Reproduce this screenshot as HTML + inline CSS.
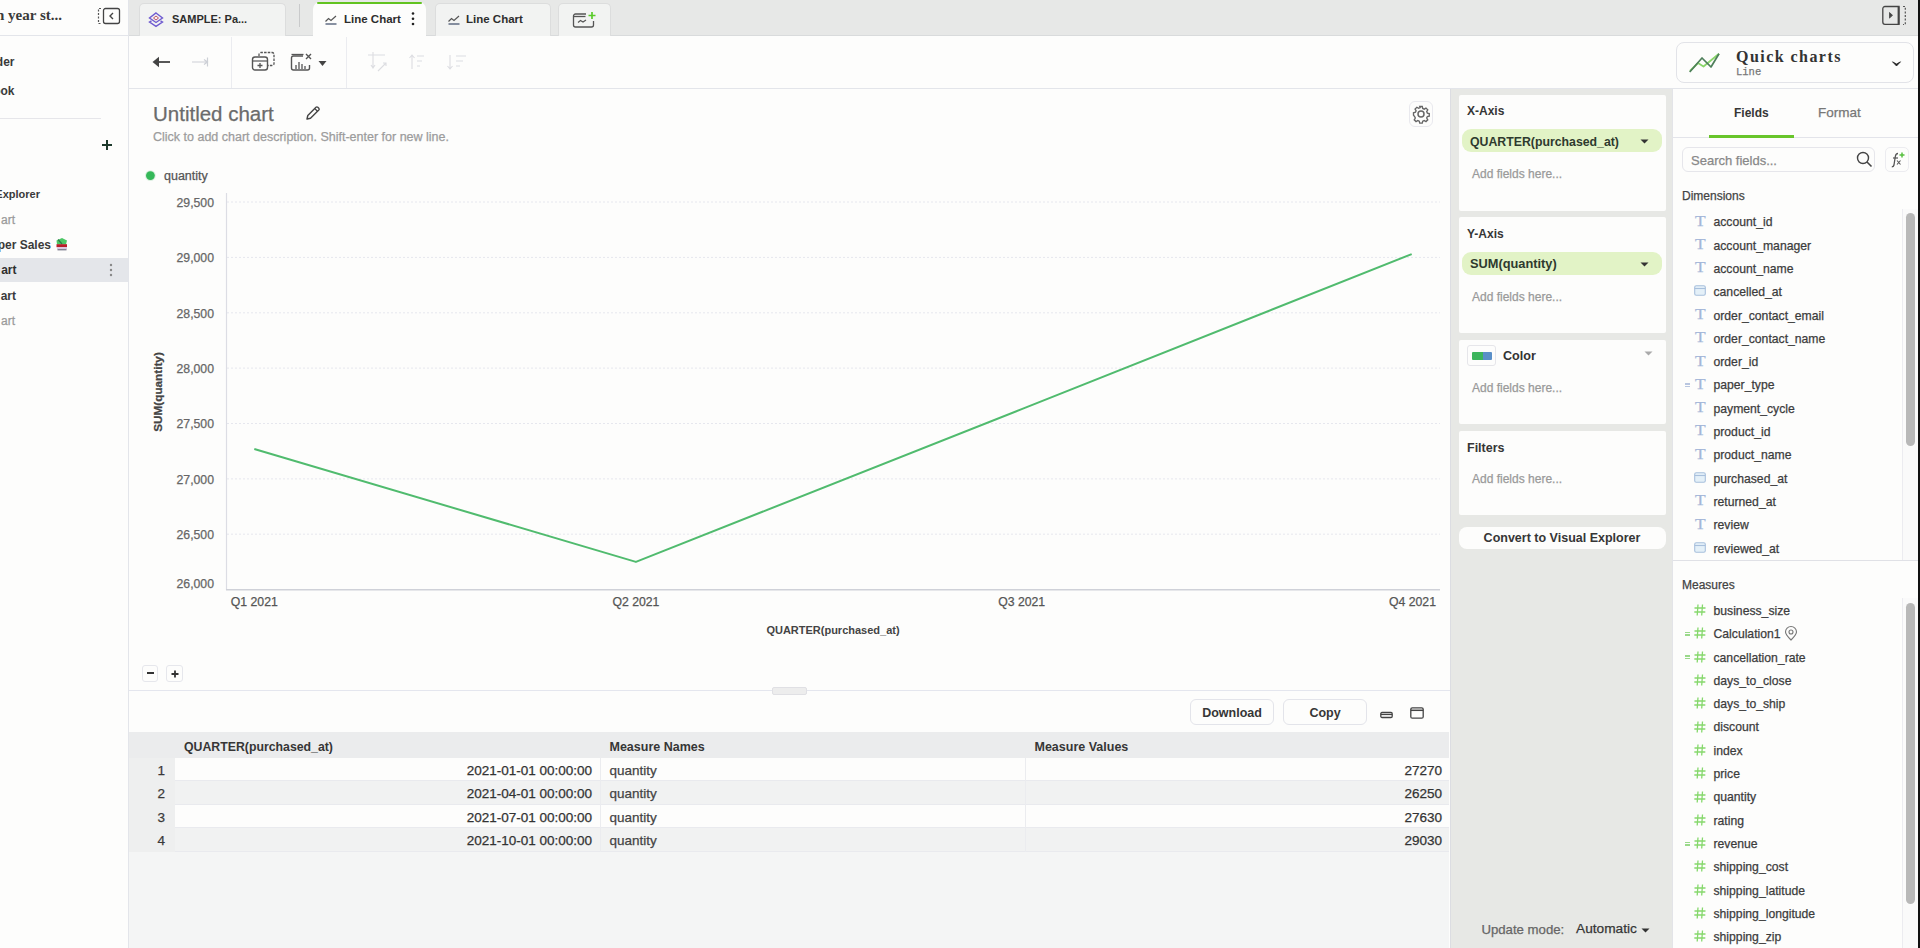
<!DOCTYPE html>
<html><head><meta charset="utf-8">
<style>
*{box-sizing:border-box;margin:0;padding:0}
html,body{width:1920px;height:948px;overflow:hidden;background:#fdfdfc;font-family:"Liberation Sans",sans-serif;color:#333;position:relative}
.a{position:absolute}
.t{position:absolute;white-space:nowrap;line-height:1;-webkit-text-stroke:0.25px currentColor}
svg{overflow:visible}
</style></head><body>
<div class="a" style="left:0px;top:0px;width:129px;height:948px;background:#fdfdfc;border-right:1px solid #e3e5ea"></div>
<div class="a" style="left:129px;top:0px;width:1789px;height:36px;background:#e7e8e7;border-bottom:1px solid #d9dbdc"></div>
<div class="a" style="left:129px;top:88px;width:1789px;height:1px;background:#e3e5ea"></div>
<div class="a" style="left:1918px;top:0px;width:2px;height:948px;background:#111"></div>
<div class="t" style="top:7.50px;font-size:15px;color:#3a3a3a;font-weight:700;-webkit-text-stroke:0;font-family:'Liberation Serif',serif;left:-4px;">n year st...</div>
<svg class="a" style="left:94px;top:6px" width="28" height="20" viewBox="0 0 28 20"><path d="M7 2.5h-2.5v15H7" fill="none" stroke="#555" stroke-width="1.2" stroke-dasharray="2 1.5"/><rect x="9.5" y="2.5" width="16" height="15" rx="2" fill="none" stroke="#444" stroke-width="1.3"/><path d="M19 7l-3 3 3 3" fill="none" stroke="#444" stroke-width="1.4"/></svg>
<div class="a" style="left:0px;top:35px;width:129px;height:1px;background:#e3e5ea"></div>
<div class="t" style="top:55.54px;font-size:12px;color:#3a3a3a;font-weight:700;-webkit-text-stroke:0;right:1905.5px;">der</div>
<div class="t" style="top:84.54px;font-size:12px;color:#3a3a3a;font-weight:700;-webkit-text-stroke:0;right:1905.5px;">ook</div>
<div class="a" style="left:0px;top:118px;width:101px;height:1px;background:#e6e6ea"></div>
<svg class="a" style="left:101px;top:139px" width="12" height="12" viewBox="0 0 12 12"><path d="M6 1v10M1 6h10" stroke="#1e3a2c" stroke-width="2"/></svg>
<div class="t" style="top:189.09px;font-size:11px;color:#3a3a3a;font-weight:700;-webkit-text-stroke:0;right:1880px;">Explorer</div>
<div class="t" style="top:213.54px;font-size:12px;color:#9a9a9a;right:1905px;">art</div>
<div class="t" style="top:238.94px;font-size:12px;color:#3a3a3a;font-weight:700;-webkit-text-stroke:0;right:1869px;">per Sales</div>
<svg class="a" style="left:55px;top:237px" width="13" height="14" viewBox="0 0 13 14"><path d="M1.5 3.5L7 1l5 2.5-1 4H2z" fill="#4cc765"/><path d="M3 2.5l4 4.5" stroke="#2d7a4a" stroke-width="1.2"/><rect x="1.5" y="7.2" width="10.5" height="3" fill="#b81d2a"/><rect x="2" y="10.2" width="10" height="2" fill="#d9c6e0"/><path d="M2.5 12.8h9" stroke="#55556a" stroke-width="1"/></svg>
<div class="a" style="left:0px;top:258px;width:128px;height:24px;background:#e4e6ea"></div>
<div class="t" style="top:264.24px;font-size:12px;color:#2f2f2f;font-weight:700;-webkit-text-stroke:0;right:1903.5px;">art</div>
<svg class="a" style="left:108px;top:263px" width="6" height="14" viewBox="0 0 6 14"><circle cx="3" cy="2" r="1.2" fill="#888"/><circle cx="3" cy="7" r="1.2" fill="#888"/><circle cx="3" cy="12" r="1.2" fill="#888"/></svg>
<div class="t" style="top:289.54px;font-size:12px;color:#3a3a3a;font-weight:700;-webkit-text-stroke:0;right:1904px;">art</div>
<div class="t" style="top:315.04px;font-size:12px;color:#9a9a9a;right:1905px;">art</div>
<div class="a" style="left:139px;top:3px;width:147px;height:33px;background:#f2f3f2;border:1px solid #dcdddd;border-bottom:none;border-radius:5px 5px 0 0"></div>
<div class="a" style="left:299px;top:4px;width:1px;height:23px;background:#c9cacb"></div>
<div class="a" style="left:435px;top:3px;width:116px;height:33px;background:#f2f3f2;border:1px solid #dcdddd;border-bottom:none;border-radius:5px 5px 0 0"></div>
<div class="a" style="left:558px;top:3px;width:53px;height:33px;background:#f2f3f2;border:1px solid #dcdddd;border-bottom:none;border-radius:5px 5px 0 0"></div>
<div class="a" style="left:313px;top:2px;width:113px;height:35px;background:#fdfdfc;border-radius:7px 7px 0 0"></div>
<div class="a" style="left:317px;top:2px;width:105px;height:2px;background:#62c320;border-radius:2px"></div>
<svg class="a" style="left:148px;top:12px" width="16" height="15" viewBox="0 0 16 15"><path d="M8 1L14.5 6 8 10.5 1.5 6z" fill="none" stroke="#6f5bd0" stroke-width="1.4"/><path d="M3.5 8.8L1.5 10 8 14.3 14.5 10 12.5 8.8" fill="none" stroke="#6f5bd0" stroke-width="1.4"/><path d="M5.5 6L8 4 10.5 6 8 8z" fill="none" stroke="#c0506b" stroke-width="1"/></svg>
<div class="t" style="top:13.99px;font-size:11px;color:#2d2d2d;font-weight:700;-webkit-text-stroke:0;left:172px;">SAMPLE: Pa...</div>
<svg class="a" style="left:325px;top:15px" width="12" height="10" viewBox="0 0 12 10"><path d="M0.5 6.5L3.5 3.5 6 5.5 11 1" fill="none" stroke="#555" stroke-width="1.2"/><path d="M0.5 9h11" stroke="#3b4a66" stroke-width="1.2"/></svg>
<div class="t" style="top:14.07px;font-size:11.5px;color:#2d2d2d;font-weight:700;-webkit-text-stroke:0;left:344px;">Line Chart</div>
<svg class="a" style="left:411px;top:12px" width="4" height="14" viewBox="0 0 4 14"><circle cx="2" cy="1.5" r="1.3" fill="#222"/><circle cx="2" cy="6.8" r="1.3" fill="#222"/><circle cx="2" cy="12" r="1.3" fill="#222"/></svg>
<svg class="a" style="left:448px;top:15px" width="12" height="10" viewBox="0 0 12 10"><path d="M0.5 6.5L3.5 3.5 6 5.5 11 1" fill="none" stroke="#555" stroke-width="1.2"/><path d="M0.5 9h11" stroke="#3b4a66" stroke-width="1.2"/></svg>
<div class="t" style="top:14.07px;font-size:11.5px;color:#2d2d2d;font-weight:700;-webkit-text-stroke:0;left:466px;">Line Chart</div>
<svg class="a" style="left:572px;top:10px" width="26" height="18" viewBox="0 0 26 18"><path d="M14 4H3.5A2 2 0 0 0 1.5 6v9a2 2 0 0 0 2 2h16a2 2 0 0 0 2-2V11" fill="none" stroke="#555" stroke-width="1.3"/><path d="M1.5 6.5h12" stroke="#555" stroke-width="1.3"/><path d="M6 12.5l2.5-2 2.5 1.5 3-2" fill="none" stroke="#555" stroke-width="1.2"/><path d="M20 2v7M16.5 5.5h7" stroke="#5acb2a" stroke-width="1.7"/></svg>
<svg class="a" style="left:1880px;top:4px" width="28" height="22" viewBox="0 0 28 22"><path d="M19 2.5H5a2.2 2.2 0 0 0-2.2 2.2v13.4a2.2 2.2 0 0 0 2.2 2.2H19z" fill="none" stroke="#444" stroke-width="1.3"/><path d="M18.5 2.5v18" stroke="#444" stroke-width="1.8"/><path d="M9.5 8.5l3 2.8-3 2.8z" fill="#444" stroke="#444" stroke-width="0.8" stroke-linejoin="round"/><path d="M23 2.5h2.3v18H23" fill="none" stroke="#555" stroke-width="1.2" stroke-dasharray="2 1.6"/></svg>
<div class="a" style="left:231px;top:37px;width:1px;height:51px;background:#ebecf0"></div>
<div class="a" style="left:346px;top:37px;width:1px;height:51px;background:#ebecf0"></div>
<svg class="a" style="left:151px;top:55px" width="22" height="14" viewBox="0 0 22 14"><path d="M5 7h14" stroke="#444" stroke-width="1.8"/><path d="M1.5 7L8 1.8V12.2z" fill="#444"/></svg>
<svg class="a" style="left:190px;top:55px" width="22" height="14" viewBox="0 0 22 14"><path d="M2 7h15M17.5 2.5v9M14 4.5l3.5 2.5-3.5 2.5" fill="none" stroke="#cdd0d6" stroke-width="1.2"/></svg>
<svg class="a" style="left:251px;top:51px" width="26" height="21" viewBox="0 0 26 21"><rect x="1.5" y="6" width="15" height="13" rx="2.5" fill="none" stroke="#555" stroke-width="1.4"/><path d="M1.5 10h15" stroke="#555" stroke-width="1.2"/><path d="M9 12v5M6.5 14.5h5" stroke="#555" stroke-width="1.3"/><path d="M8 5V3.5a2 2 0 0 1 2-2h11a2 2 0 0 1 2 2v9a2 2 0 0 1-2 2h-4" fill="none" stroke="#555" stroke-width="1.3" stroke-dasharray="2.5 1.2"/></svg>
<svg class="a" style="left:290px;top:52px" width="40" height="20" viewBox="0 0 40 20"><path d="M13 4H3.5a2 2 0 0 0-2 2v10a2 2 0 0 0 2 2h14a2 2 0 0 0 2-2v-3" fill="none" stroke="#555" stroke-width="1.4"/><path d="M1.5 2.5h12" stroke="#555" stroke-width="1.3"/><path d="M6 17v-4M9 17v-7M12 17v-5M15 17v-3" stroke="#555" stroke-width="1.3"/><path d="M16 2l5 5M21 2l-5 5" stroke="#555" stroke-width="1.4"/><path d="M28.5 9h8l-4 5z" fill="#444"/></svg>
<svg class="a" style="left:367px;top:51px" width="24" height="22" viewBox="0 0 24 22"><path d="M1 4h17M6 1v16M4 14l2 3 2-3" fill="none" stroke="#dcdde1" stroke-width="1.1"/><path d="M11 20l8-8M16 12h3v3" fill="none" stroke="#dcdde1" stroke-width="1.1"/></svg>
<svg class="a" style="left:408px;top:53px" width="18" height="18" viewBox="0 0 18 18"><path d="M4 16V2M1.5 5L4 2l2.5 3" fill="none" stroke="#dcdde1" stroke-width="1.1"/><path d="M9 3h7M9 8h5M9 13h3" stroke="#dcdde1" stroke-width="1.1"/></svg>
<svg class="a" style="left:446px;top:53px" width="22" height="18" viewBox="0 0 22 18"><path d="M4 2v14M1.5 13L4 16l2.5-3" fill="none" stroke="#dcdde1" stroke-width="1.1"/><path d="M10 3h10M10 8h7M10 13h4" stroke="#dcdde1" stroke-width="1.1"/></svg>
<div class="a" style="left:1676px;top:42px;width:238px;height:41px;background:#fdfdfc;border:1px solid #e2e3e8;border-radius:8px"></div>
<svg class="a" style="left:1684px;top:48px" width="42" height="30" viewBox="0 0 42 30"><path d="M6 23L14 15 19.5 18.5 35 5.7" fill="none" stroke="#8ad66a" stroke-width="1.8" stroke-linejoin="round"/><path d="M5.7 24L18 10 27 19 35 5.7" fill="none" stroke="#4e7f5a" stroke-width="1.7" stroke-linejoin="round"/></svg>
<div class="t" style="top:48.66px;font-size:16px;color:#333;font-weight:700;-webkit-text-stroke:0;letter-spacing:1.45px;font-family:'Liberation Serif',serif;left:1736px;">Quick charts</div>
<div class="t" style="top:66.81px;font-size:10.5px;color:#777;font-family:'Liberation Mono',monospace;left:1736px;">Line</div>
<svg class="a" style="left:1892px;top:61px" width="9" height="6" viewBox="0 0 9 6"><path d="M0.5 0.8L4.5 5 8.5 0.8 4.5 3z" fill="#222" stroke="#222" stroke-width="0.8" stroke-linejoin="round"/></svg>
<div class="t" style="top:104.35px;font-size:20.5px;color:#6b6b6b;left:153px;">Untitled chart</div>
<svg class="a" style="left:304px;top:104px" width="18" height="18" viewBox="0 0 18 18"><path d="M3 15l0.8-3.5L12 3.3a1.3 1.3 0 0 1 1.8 0l1 1a1.3 1.3 0 0 1 0 1.8L6.5 14.2z" fill="none" stroke="#444" stroke-width="1.4" stroke-linejoin="round"/><path d="M10.8 4.6l2.7 2.7" stroke="#444" stroke-width="1.3"/></svg>
<div class="t" style="top:131.12px;font-size:12.5px;color:#9c9c9c;left:153px;">Click to add chart description. Shift-enter for new line.</div>
<div class="a" style="left:1409px;top:101px;width:24px;height:26px;border:1px solid #e9e9ee;border-radius:6px"></div>
<svg class="a" style="left:1412px;top:105px" width="18" height="18" viewBox="0 0 24 24"><path fill="none" stroke="#666" stroke-width="2" d="M12 8a4 4 0 1 0 0 8 4 4 0 0 0 0-8z"/><path fill="none" stroke="#666" stroke-width="1.8" d="M10.3 2h3.4l.6 2.6 2 .9 2.3-1.4 2.4 2.4-1.4 2.3.9 2 2.5.6v3.4l-2.5.6-.9 2 1.4 2.3-2.4 2.4-2.3-1.4-2 .9-.6 2.6h-3.4l-.6-2.6-2-.9-2.3 1.4-2.4-2.4 1.4-2.3-.9-2L2 13.7v-3.4l2.6-.6.9-2-1.4-2.3 2.4-2.4 2.3 1.4 2-.9z"/></svg>
<svg class="a" style="left:144px;top:170px" width="12" height="12" viewBox="0 0 12 12"><circle cx="6.4" cy="5.6" r="5.4" fill="#dcefe0"/><circle cx="6.4" cy="5.6" r="4.4" fill="#35b859"/></svg>
<div class="t" style="top:169.92px;font-size:12.5px;color:#555;left:164px;">quantity</div>
<svg class="a" style="left:0;top:0" width="1450" height="700" viewBox="0 0 1450 700"><line x1="227" y1="202.0" x2="1440" y2="202.0" stroke="#e6e7ee" stroke-width="1" stroke-dasharray="2 2"/><line x1="227" y1="257.4" x2="1440" y2="257.4" stroke="#e6e7ee" stroke-width="1" stroke-dasharray="2 2"/><line x1="227" y1="312.8" x2="1440" y2="312.8" stroke="#e6e7ee" stroke-width="1" stroke-dasharray="2 2"/><line x1="227" y1="368.1" x2="1440" y2="368.1" stroke="#e6e7ee" stroke-width="1" stroke-dasharray="2 2"/><line x1="227" y1="423.5" x2="1440" y2="423.5" stroke="#e6e7ee" stroke-width="1" stroke-dasharray="2 2"/><line x1="227" y1="478.9" x2="1440" y2="478.9" stroke="#e6e7ee" stroke-width="1" stroke-dasharray="2 2"/><line x1="227" y1="534.2" x2="1440" y2="534.2" stroke="#e6e7ee" stroke-width="1" stroke-dasharray="2 2"/><line x1="226.5" y1="193" x2="226.5" y2="590" stroke="#dcdde4" stroke-width="1.2"/><line x1="226" y1="589.8" x2="1440" y2="589.8" stroke="#cfd1d8" stroke-width="1.6"/><polyline points="254.3,449.0 635.9,561.9 1021.7,409.1 1411.7,254.1" fill="none" stroke="#50bb6e" stroke-width="2" stroke-linejoin="round"/></svg>
<div class="t" style="top:196.73px;font-size:12.25px;color:#666;right:1706px;">29,500</div>
<div class="t" style="top:252.13px;font-size:12.25px;color:#666;right:1706px;">29,000</div>
<div class="t" style="top:307.53px;font-size:12.25px;color:#666;right:1706px;">28,500</div>
<div class="t" style="top:362.83px;font-size:12.25px;color:#666;right:1706px;">28,000</div>
<div class="t" style="top:418.23px;font-size:12.25px;color:#666;right:1706px;">27,500</div>
<div class="t" style="top:473.63px;font-size:12.25px;color:#666;right:1706px;">27,000</div>
<div class="t" style="top:528.93px;font-size:12.25px;color:#666;right:1706px;">26,500</div>
<div class="t" style="top:577.93px;font-size:12.25px;color:#666;right:1706px;">26,000</div>
<div class="t" style="top:595.83px;font-size:12.25px;color:#555;left:254.3px;transform:translateX(-50%);">Q1 2021</div>
<div class="t" style="top:595.83px;font-size:12.25px;color:#555;left:635.9px;transform:translateX(-50%);">Q2 2021</div>
<div class="t" style="top:595.83px;font-size:12.25px;color:#555;left:1021.7px;transform:translateX(-50%);">Q3 2021</div>
<div class="t" style="top:595.83px;font-size:12.25px;color:#555;right:484px;">Q4 2021</div>
<div class="t" style="top:625.09px;font-size:11px;color:#444;font-weight:700;-webkit-text-stroke:0;left:833px;transform:translateX(-50%);">QUARTER(purchased_at)</div>
<div class="t" style="left:157.5px;top:392px;font-size:11.75px;font-weight:700;color:#444;transform:translate(-50%,-50%) rotate(-90deg)">SUM(quantity)</div>
<div class="a" style="left:142px;top:665px;width:16px;height:17px;border:1px solid #e6e7ec;border-radius:3px"></div>
<div class="a" style="left:166px;top:665px;width:17px;height:17px;border:1px solid #e6e7ec;border-radius:3px"></div>
<div class="a" style="left:147px;top:672px;width:7px;height:2px;background:#333"></div>
<svg class="a" style="left:171px;top:670px" width="8" height="8" viewBox="0 0 8 8"><path d="M4 0.5v7M0.5 4h7" stroke="#333" stroke-width="1.8"/></svg>
<div class="a" style="left:129px;top:690px;width:1321px;height:1px;background:#e4e6ee"></div>
<div class="a" style="left:772px;top:687px;width:35px;height:8px;background:#ededed;border:1px solid #e0e0e4;border-radius:2px"></div>
<div class="a" style="left:1450px;top:89px;width:222px;height:859px;background:#e7e8e5;border-left:1px solid #dcdde2"></div>
<div class="a" style="left:1459px;top:95px;width:207px;height:116px;background:#fdfdfc;border-radius:2px"></div>
<div class="a" style="left:1459px;top:217px;width:207px;height:116px;background:#fdfdfc;border-radius:2px"></div>
<div class="a" style="left:1459px;top:340px;width:207px;height:84px;background:#fdfdfc;border-radius:2px"></div>
<div class="a" style="left:1459px;top:431px;width:207px;height:84px;background:#fdfdfc;border-radius:2px"></div>
<div class="a" style="left:1459px;top:527px;width:207px;height:22px;background:#fdfdfc;border-radius:8px"></div>
<div class="t" style="top:105.04px;font-size:12px;color:#363636;font-weight:700;-webkit-text-stroke:0;left:1467px;">X-Axis</div>
<div class="a" style="left:1462px;top:129px;width:200px;height:23px;background:#e2f3c6;border-radius:9px"></div>
<div class="t" style="top:135.89px;font-size:12.3px;color:#2e3a2e;font-weight:700;-webkit-text-stroke:0;left:1470px;">QUARTER(purchased_at)</div>
<svg class="a" style="left:1640px;top:139px" width="9" height="5" viewBox="0 0 9 5"><path d="M0.5 0.5h8L4.5 4.5z" fill="#333"/></svg>
<div class="t" style="top:167.84px;font-size:12px;color:#9a9a9a;left:1472px;">Add fields here...</div>
<div class="t" style="top:227.94px;font-size:12px;color:#363636;font-weight:700;-webkit-text-stroke:0;left:1467px;">Y-Axis</div>
<div class="a" style="left:1462px;top:252px;width:200px;height:23px;background:#e2f3c6;border-radius:9px"></div>
<div class="t" style="top:258.06px;font-size:12.8px;color:#2e3a2e;font-weight:700;-webkit-text-stroke:0;left:1470px;">SUM(quantity)</div>
<svg class="a" style="left:1640px;top:262px" width="9" height="5" viewBox="0 0 9 5"><path d="M0.5 0.5h8L4.5 4.5z" fill="#333"/></svg>
<div class="t" style="top:290.74px;font-size:12px;color:#9a9a9a;left:1472px;">Add fields here...</div>
<div class="a" style="left:1467px;top:345px;width:29px;height:21px;border:1px solid #e6e6ea;border-radius:3px"></div>
<div class="a" style="left:1472px;top:352px;width:20px;height:8px;background:linear-gradient(90deg,#3cb55c 0,#3cb55c 55%,#5a8fc8 55%,#5a8fc8 100%);border-radius:1px"></div>
<div class="t" style="top:349.63px;font-size:12.6px;color:#333;font-weight:700;-webkit-text-stroke:0;left:1503px;">Color</div>
<svg class="a" style="left:1644px;top:351px" width="9" height="5" viewBox="0 0 9 5"><path d="M0.5 0.5h8L4.5 4.5z" fill="#aaa"/></svg>
<div class="t" style="top:381.74px;font-size:12px;color:#9a9a9a;left:1472px;">Add fields here...</div>
<div class="t" style="top:442.12px;font-size:12.5px;color:#363636;font-weight:700;-webkit-text-stroke:0;left:1467px;">Filters</div>
<div class="t" style="top:472.94px;font-size:12px;color:#9a9a9a;left:1472px;">Add fields here...</div>
<div class="t" style="top:532.42px;font-size:12.5px;color:#363636;font-weight:700;-webkit-text-stroke:0;left:1562px;transform:translateX(-50%);">Convert to Visual Explorer</div>
<div class="t" style="top:922.83px;font-size:13.2px;color:#666;left:1481.4px;">Update mode:</div>
<div class="t" style="top:922.40px;font-size:13.7px;color:#363636;left:1576px;">Automatic</div>
<svg class="a" style="left:1641px;top:928px" width="9" height="5" viewBox="0 0 9 5"><path d="M0.5 0.5h8L4.5 4.5z" fill="#333"/></svg>
<div class="a" style="left:1672px;top:89px;width:246px;height:859px;background:#fdfdfc;border-left:1px solid #e3e4e8"></div>
<div class="t" style="top:107.24px;font-size:12px;color:#363636;font-weight:700;-webkit-text-stroke:0;left:1734px;">Fields</div>
<div class="t" style="top:105.97px;font-size:13.5px;color:#777;left:1818px;">Format</div>
<div class="a" style="left:1673px;top:137px;width:245px;height:1px;background:#e3e4ea"></div>
<div class="a" style="left:1709px;top:135px;width:85px;height:2.5px;background:#68c52a"></div>
<div class="a" style="left:1682px;top:147px;width:193px;height:25px;border:1px solid #e6e6eb;border-radius:6px"></div>
<div class="t" style="top:154.10px;font-size:13px;color:#888;left:1691px;">Search fields...</div>
<svg class="a" style="left:1856px;top:151px" width="17" height="17" viewBox="0 0 17 17"><circle cx="7" cy="7" r="5.5" fill="none" stroke="#444" stroke-width="1.4"/><path d="M11 11l4.5 4.5" stroke="#444" stroke-width="1.6"/></svg>
<div class="a" style="left:1885px;top:147px;width:24px;height:25px;border:1px solid #ececf0;border-radius:5px"></div>
<svg class="a" style="left:1889px;top:151px" width="17" height="17" viewBox="0 0 17 17"><path d="M9 2.5c-2 0-2.4 1.2-2.7 3L5 14c-.3 1.3-.9 1.8-2.2 1.8" fill="none" stroke="#555" stroke-width="1.3"/><path d="M4 7h5" stroke="#555" stroke-width="1.2"/><path d="M8 9.5l3.5 4M11.5 9.5L8 13.5" stroke="#555" stroke-width="1.1"/><path d="M13 1.5v5M10.5 4h5" stroke="#58c040" stroke-width="1.5"/></svg>
<div class="t" style="top:190.14px;font-size:12px;color:#444;left:1682px;">Dimensions</div>
<div class="t" style="left:1694.5px;top:212.7px;font-size:15.5px;font-family:'Liberation Serif',serif;color:#a3b6d8;transform:scaleX(1.12);transform-origin:left">T</div>
<div class="t" style="top:216.37px;font-size:12.2px;color:#3c3c3c;left:1713.5px;">account_id</div>
<div class="t" style="left:1694.5px;top:236.0px;font-size:15.5px;font-family:'Liberation Serif',serif;color:#a3b6d8;transform:scaleX(1.12);transform-origin:left">T</div>
<div class="t" style="top:239.67px;font-size:12.2px;color:#3c3c3c;left:1713.5px;">account_manager</div>
<div class="t" style="left:1694.5px;top:259.3px;font-size:15.5px;font-family:'Liberation Serif',serif;color:#a3b6d8;transform:scaleX(1.12);transform-origin:left">T</div>
<div class="t" style="top:262.97px;font-size:12.2px;color:#3c3c3c;left:1713.5px;">account_name</div>
<svg class="a" style="left:1694px;top:285.4px" width="12" height="11" viewBox="0 0 12 11"><rect x="0.7" y="0.7" width="10.6" height="9.6" rx="1.5" fill="#e4f0f8" stroke="#a8c0dc" stroke-width="1.1"/><path d="M0.7 3.5h10.6" stroke="#a8c0dc" stroke-width="1.1"/></svg>
<div class="t" style="top:286.27px;font-size:12.2px;color:#3c3c3c;left:1713.5px;">cancelled_at</div>
<div class="t" style="left:1694.5px;top:305.9px;font-size:15.5px;font-family:'Liberation Serif',serif;color:#a3b6d8;transform:scaleX(1.12);transform-origin:left">T</div>
<div class="t" style="top:309.57px;font-size:12.2px;color:#3c3c3c;left:1713.5px;">order_contact_email</div>
<div class="t" style="left:1694.5px;top:329.2px;font-size:15.5px;font-family:'Liberation Serif',serif;color:#a3b6d8;transform:scaleX(1.12);transform-origin:left">T</div>
<div class="t" style="top:332.87px;font-size:12.2px;color:#3c3c3c;left:1713.5px;">order_contact_name</div>
<div class="t" style="left:1694.5px;top:352.5px;font-size:15.5px;font-family:'Liberation Serif',serif;color:#a3b6d8;transform:scaleX(1.12);transform-origin:left">T</div>
<div class="t" style="top:356.17px;font-size:12.2px;color:#3c3c3c;left:1713.5px;">order_id</div>
<div class="t" style="left:1694.5px;top:375.8px;font-size:15.5px;font-family:'Liberation Serif',serif;color:#a3b6d8;transform:scaleX(1.12);transform-origin:left">T</div>
<div class="t" style="top:379.47px;font-size:12.2px;color:#3c3c3c;left:1713.5px;">paper_type</div>
<div class="t" style="left:1694.5px;top:399.1px;font-size:15.5px;font-family:'Liberation Serif',serif;color:#a3b6d8;transform:scaleX(1.12);transform-origin:left">T</div>
<div class="t" style="top:402.77px;font-size:12.2px;color:#3c3c3c;left:1713.5px;">payment_cycle</div>
<div class="t" style="left:1694.5px;top:422.4px;font-size:15.5px;font-family:'Liberation Serif',serif;color:#a3b6d8;transform:scaleX(1.12);transform-origin:left">T</div>
<div class="t" style="top:426.07px;font-size:12.2px;color:#3c3c3c;left:1713.5px;">product_id</div>
<div class="t" style="left:1694.5px;top:445.7px;font-size:15.5px;font-family:'Liberation Serif',serif;color:#a3b6d8;transform:scaleX(1.12);transform-origin:left">T</div>
<div class="t" style="top:449.37px;font-size:12.2px;color:#3c3c3c;left:1713.5px;">product_name</div>
<svg class="a" style="left:1694px;top:471.8px" width="12" height="11" viewBox="0 0 12 11"><rect x="0.7" y="0.7" width="10.6" height="9.6" rx="1.5" fill="#e4f0f8" stroke="#a8c0dc" stroke-width="1.1"/><path d="M0.7 3.5h10.6" stroke="#a8c0dc" stroke-width="1.1"/></svg>
<div class="t" style="top:472.67px;font-size:12.2px;color:#3c3c3c;left:1713.5px;">purchased_at</div>
<div class="t" style="left:1694.5px;top:492.3px;font-size:15.5px;font-family:'Liberation Serif',serif;color:#a3b6d8;transform:scaleX(1.12);transform-origin:left">T</div>
<div class="t" style="top:495.97px;font-size:12.2px;color:#3c3c3c;left:1713.5px;">returned_at</div>
<div class="t" style="left:1694.5px;top:515.6px;font-size:15.5px;font-family:'Liberation Serif',serif;color:#a3b6d8;transform:scaleX(1.12);transform-origin:left">T</div>
<div class="t" style="top:519.27px;font-size:12.2px;color:#3c3c3c;left:1713.5px;">review</div>
<svg class="a" style="left:1694px;top:541.7px" width="12" height="11" viewBox="0 0 12 11"><rect x="0.7" y="0.7" width="10.6" height="9.6" rx="1.5" fill="#e4f0f8" stroke="#a8c0dc" stroke-width="1.1"/><path d="M0.7 3.5h10.6" stroke="#a8c0dc" stroke-width="1.1"/></svg>
<div class="t" style="top:542.57px;font-size:12.2px;color:#3c3c3c;left:1713.5px;">reviewed_at</div>
<div class="a" style="left:1685px;top:383px;width:5px;height:1.5px;background:#b9c6e0"></div>
<div class="a" style="left:1685px;top:385.5px;width:5px;height:1.5px;background:#b9c6e0"></div>
<div class="a" style="left:1902px;top:209px;width:16px;height:352px;border-left:1px solid #ececf0;background:#fafafa"></div>
<div class="a" style="left:1906px;top:213px;width:9px;height:233px;background:#b8b8b8;border-radius:5px"></div>
<div class="a" style="left:1673px;top:560px;width:245px;height:1px;background:#e0e1e6"></div>
<div class="t" style="top:579.14px;font-size:12px;color:#444;left:1682px;">Measures</div>
<svg class="a" style="left:1694px;top:604.1px" width="12" height="12" viewBox="0 0 12 12"><path d="M4 0.5L3.2 11.5M8.5 0.5L7.7 11.5M0.5 4h11M0.3 8h11" stroke="#86d86c" stroke-width="1.3"/></svg>
<div class="t" style="top:604.97px;font-size:12.2px;color:#3c3c3c;left:1713.5px;">business_size</div>
<svg class="a" style="left:1694px;top:627.4px" width="12" height="12" viewBox="0 0 12 12"><path d="M4 0.5L3.2 11.5M8.5 0.5L7.7 11.5M0.5 4h11M0.3 8h11" stroke="#86d86c" stroke-width="1.3"/></svg>
<div class="t" style="top:628.27px;font-size:12.2px;color:#3c3c3c;left:1713.5px;">Calculation1</div>
<div class="a" style="left:1685px;top:631.9px;width:5px;height:1.5px;background:#9ad98a"></div>
<div class="a" style="left:1685px;top:634.4px;width:5px;height:1.5px;background:#9ad98a"></div>
<svg class="a" style="left:1694px;top:650.7px" width="12" height="12" viewBox="0 0 12 12"><path d="M4 0.5L3.2 11.5M8.5 0.5L7.7 11.5M0.5 4h11M0.3 8h11" stroke="#86d86c" stroke-width="1.3"/></svg>
<div class="t" style="top:651.57px;font-size:12.2px;color:#3c3c3c;left:1713.5px;">cancellation_rate</div>
<div class="a" style="left:1685px;top:655.2px;width:5px;height:1.5px;background:#9ad98a"></div>
<div class="a" style="left:1685px;top:657.7px;width:5px;height:1.5px;background:#9ad98a"></div>
<svg class="a" style="left:1694px;top:674.0px" width="12" height="12" viewBox="0 0 12 12"><path d="M4 0.5L3.2 11.5M8.5 0.5L7.7 11.5M0.5 4h11M0.3 8h11" stroke="#86d86c" stroke-width="1.3"/></svg>
<div class="t" style="top:674.87px;font-size:12.2px;color:#3c3c3c;left:1713.5px;">days_to_close</div>
<svg class="a" style="left:1694px;top:697.3px" width="12" height="12" viewBox="0 0 12 12"><path d="M4 0.5L3.2 11.5M8.5 0.5L7.7 11.5M0.5 4h11M0.3 8h11" stroke="#86d86c" stroke-width="1.3"/></svg>
<div class="t" style="top:698.17px;font-size:12.2px;color:#3c3c3c;left:1713.5px;">days_to_ship</div>
<svg class="a" style="left:1694px;top:720.6px" width="12" height="12" viewBox="0 0 12 12"><path d="M4 0.5L3.2 11.5M8.5 0.5L7.7 11.5M0.5 4h11M0.3 8h11" stroke="#86d86c" stroke-width="1.3"/></svg>
<div class="t" style="top:721.47px;font-size:12.2px;color:#3c3c3c;left:1713.5px;">discount</div>
<svg class="a" style="left:1694px;top:743.9px" width="12" height="12" viewBox="0 0 12 12"><path d="M4 0.5L3.2 11.5M8.5 0.5L7.7 11.5M0.5 4h11M0.3 8h11" stroke="#86d86c" stroke-width="1.3"/></svg>
<div class="t" style="top:744.77px;font-size:12.2px;color:#3c3c3c;left:1713.5px;">index</div>
<svg class="a" style="left:1694px;top:767.2px" width="12" height="12" viewBox="0 0 12 12"><path d="M4 0.5L3.2 11.5M8.5 0.5L7.7 11.5M0.5 4h11M0.3 8h11" stroke="#86d86c" stroke-width="1.3"/></svg>
<div class="t" style="top:768.07px;font-size:12.2px;color:#3c3c3c;left:1713.5px;">price</div>
<svg class="a" style="left:1694px;top:790.5px" width="12" height="12" viewBox="0 0 12 12"><path d="M4 0.5L3.2 11.5M8.5 0.5L7.7 11.5M0.5 4h11M0.3 8h11" stroke="#86d86c" stroke-width="1.3"/></svg>
<div class="t" style="top:791.37px;font-size:12.2px;color:#3c3c3c;left:1713.5px;">quantity</div>
<svg class="a" style="left:1694px;top:813.8px" width="12" height="12" viewBox="0 0 12 12"><path d="M4 0.5L3.2 11.5M8.5 0.5L7.7 11.5M0.5 4h11M0.3 8h11" stroke="#86d86c" stroke-width="1.3"/></svg>
<div class="t" style="top:814.67px;font-size:12.2px;color:#3c3c3c;left:1713.5px;">rating</div>
<svg class="a" style="left:1694px;top:837.1px" width="12" height="12" viewBox="0 0 12 12"><path d="M4 0.5L3.2 11.5M8.5 0.5L7.7 11.5M0.5 4h11M0.3 8h11" stroke="#86d86c" stroke-width="1.3"/></svg>
<div class="t" style="top:837.97px;font-size:12.2px;color:#3c3c3c;left:1713.5px;">revenue</div>
<div class="a" style="left:1685px;top:841.6px;width:5px;height:1.5px;background:#9ad98a"></div>
<div class="a" style="left:1685px;top:844.1px;width:5px;height:1.5px;background:#9ad98a"></div>
<svg class="a" style="left:1694px;top:860.4px" width="12" height="12" viewBox="0 0 12 12"><path d="M4 0.5L3.2 11.5M8.5 0.5L7.7 11.5M0.5 4h11M0.3 8h11" stroke="#86d86c" stroke-width="1.3"/></svg>
<div class="t" style="top:861.27px;font-size:12.2px;color:#3c3c3c;left:1713.5px;">shipping_cost</div>
<svg class="a" style="left:1694px;top:883.7px" width="12" height="12" viewBox="0 0 12 12"><path d="M4 0.5L3.2 11.5M8.5 0.5L7.7 11.5M0.5 4h11M0.3 8h11" stroke="#86d86c" stroke-width="1.3"/></svg>
<div class="t" style="top:884.57px;font-size:12.2px;color:#3c3c3c;left:1713.5px;">shipping_latitude</div>
<svg class="a" style="left:1694px;top:907.0px" width="12" height="12" viewBox="0 0 12 12"><path d="M4 0.5L3.2 11.5M8.5 0.5L7.7 11.5M0.5 4h11M0.3 8h11" stroke="#86d86c" stroke-width="1.3"/></svg>
<div class="t" style="top:907.87px;font-size:12.2px;color:#3c3c3c;left:1713.5px;">shipping_longitude</div>
<svg class="a" style="left:1694px;top:930.3px" width="12" height="12" viewBox="0 0 12 12"><path d="M4 0.5L3.2 11.5M8.5 0.5L7.7 11.5M0.5 4h11M0.3 8h11" stroke="#86d86c" stroke-width="1.3"/></svg>
<div class="t" style="top:931.17px;font-size:12.2px;color:#3c3c3c;left:1713.5px;">shipping_zip</div>
<svg class="a" style="left:1784px;top:626px" width="14" height="15" viewBox="0 0 14 15"><path d="M7 14c-3-3-5.5-5.5-5.5-8a5.5 5.5 0 0 1 11 0c0 2.5-2.5 5-5.5 8z" fill="none" stroke="#777" stroke-width="1.1"/><circle cx="7" cy="6" r="2" fill="none" stroke="#777" stroke-width="1.1"/></svg>
<div class="a" style="left:1902px;top:598px;width:16px;height:350px;border-left:1px solid #ececf0;background:#fafafa"></div>
<div class="a" style="left:1906px;top:603px;width:9px;height:301px;background:#b8b8b8;border-radius:5px"></div>
<div class="a" style="left:1190px;top:699px;width:84px;height:26px;background:#fdfdfc;border:1px solid #e3e4ea;border-radius:6px"></div>
<div class="t" style="top:706.72px;font-size:12.5px;color:#363636;font-weight:700;-webkit-text-stroke:0;left:1232px;transform:translateX(-50%);">Download</div>
<div class="a" style="left:1283px;top:699px;width:84px;height:26px;background:#fdfdfc;border:1px solid #e3e4ea;border-radius:6px"></div>
<div class="t" style="top:706.72px;font-size:12.5px;color:#363636;font-weight:700;-webkit-text-stroke:0;left:1325px;transform:translateX(-50%);">Copy</div>
<svg class="a" style="left:1380px;top:711px" width="13" height="8" viewBox="0 0 13 8"><rect x="0.8" y="1.5" width="11.4" height="5" rx="1.2" fill="none" stroke="#444" stroke-width="1.3"/><path d="M0.8 3.5h11.4" stroke="#444" stroke-width="1.2"/></svg>
<svg class="a" style="left:1410px;top:707px" width="14" height="12" viewBox="0 0 14 12"><rect x="0.8" y="0.8" width="12.4" height="10.4" rx="1.5" fill="none" stroke="#444" stroke-width="1.3"/><path d="M0.8 3.3h12.4" stroke="#444" stroke-width="1.5"/></svg>
<div class="a" style="left:129px;top:732px;width:1320px;height:216px;background:#f4f5f5"></div>
<div class="a" style="left:129px;top:732px;width:1320px;height:26px;background:#ebeced"></div>
<div class="a" style="left:129px;top:758px;width:46px;height:94px;background:#eeefef"></div>
<div class="a" style="left:175px;top:758px;width:1274px;height:23px;background:#fdfdfc;border-bottom:1px solid #e9eaee"></div>
<div class="t" style="top:764.17px;font-size:13.5px;color:#3a3a3a;right:1755px;">1</div>
<div class="t" style="top:764.17px;font-size:13.5px;color:#333;right:1328px;">2021-01-01 00:00:00</div>
<div class="t" style="top:764.17px;font-size:13.5px;color:#444;left:609.5px;">quantity</div>
<div class="t" style="top:764.17px;font-size:13.5px;color:#333;right:478px;">27270</div>
<div class="a" style="left:175px;top:781px;width:1274px;height:24px;background:#f1f2f2;border-bottom:1px solid #e9eaee"></div>
<div class="t" style="top:787.47px;font-size:13.5px;color:#3a3a3a;right:1755px;">2</div>
<div class="t" style="top:787.47px;font-size:13.5px;color:#333;right:1328px;">2021-04-01 00:00:00</div>
<div class="t" style="top:787.47px;font-size:13.5px;color:#444;left:609.5px;">quantity</div>
<div class="t" style="top:787.47px;font-size:13.5px;color:#333;right:478px;">26250</div>
<div class="a" style="left:175px;top:805px;width:1274px;height:23px;background:#fdfdfc;border-bottom:1px solid #e9eaee"></div>
<div class="t" style="top:810.77px;font-size:13.5px;color:#3a3a3a;right:1755px;">3</div>
<div class="t" style="top:810.77px;font-size:13.5px;color:#333;right:1328px;">2021-07-01 00:00:00</div>
<div class="t" style="top:810.77px;font-size:13.5px;color:#444;left:609.5px;">quantity</div>
<div class="t" style="top:810.77px;font-size:13.5px;color:#333;right:478px;">27630</div>
<div class="a" style="left:175px;top:828px;width:1274px;height:24px;background:#f1f2f2;border-bottom:1px solid #e9eaee"></div>
<div class="t" style="top:834.07px;font-size:13.5px;color:#3a3a3a;right:1755px;">4</div>
<div class="t" style="top:834.07px;font-size:13.5px;color:#333;right:1328px;">2021-10-01 00:00:00</div>
<div class="t" style="top:834.07px;font-size:13.5px;color:#444;left:609.5px;">quantity</div>
<div class="t" style="top:834.07px;font-size:13.5px;color:#333;right:478px;">29030</div>
<div class="a" style="left:600px;top:758px;width:1px;height:94px;background:#ebecef"></div>
<div class="a" style="left:1025px;top:758px;width:1px;height:94px;background:#ebecef"></div>
<div class="t" style="top:740.89px;font-size:12.3px;color:#363636;font-weight:700;-webkit-text-stroke:0;left:184px;">QUARTER(purchased_at)</div>
<div class="t" style="top:740.72px;font-size:12.5px;color:#363636;font-weight:700;-webkit-text-stroke:0;left:609.5px;">Measure Names</div>
<div class="t" style="top:740.72px;font-size:12.5px;color:#363636;font-weight:700;-webkit-text-stroke:0;left:1034.5px;">Measure Values</div>
</body></html>
